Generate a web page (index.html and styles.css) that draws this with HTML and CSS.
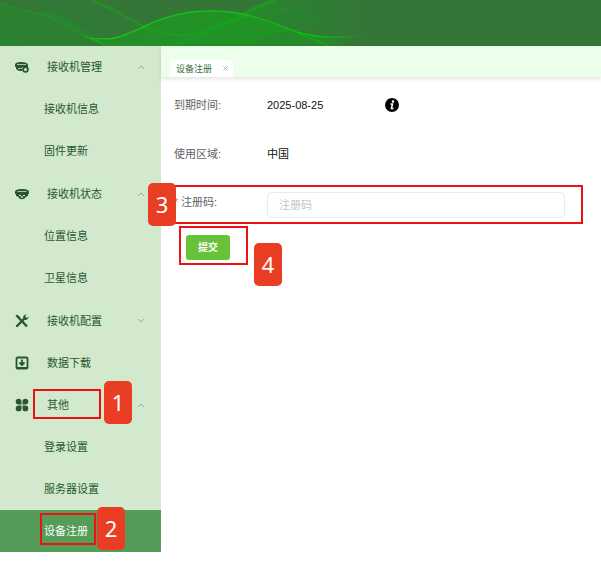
FILE: index.html
```html
<!DOCTYPE html>
<html lang="zh-CN">
<head>
<meta charset="utf-8">
<meta name="viewport" content="width=device-width, initial-scale=1">
<title>设备注册</title>
<link rel="stylesheet" href="styles.css">
</head>
<body>
<header class="banner">
  <svg class="waves" width="400" height="46" viewBox="0 0 400 46" aria-hidden="true">
    <defs>
      <linearGradient id="hill" x1="88" y1="0" x2="360" y2="0" gradientUnits="userSpaceOnUse">
        <stop offset="0" stop-color="#16a51a" stop-opacity=".45"/>
        <stop offset=".45" stop-color="#1a9d1e" stop-opacity=".7"/>
        <stop offset=".8" stop-color="#16a51a" stop-opacity=".65"/>
        <stop offset="1" stop-color="#1d9a20" stop-opacity="0"/>
      </linearGradient>
      <linearGradient id="crest" x1="80" y1="0" x2="365" y2="0" gradientUnits="userSpaceOnUse">
        <stop offset="0" stop-color="#12b816" stop-opacity="0"/>
        <stop offset=".08" stop-color="#12c816"/>
        <stop offset=".85" stop-color="#12b816"/>
        <stop offset="1" stop-color="#12b816" stop-opacity="0"/>
      </linearGradient>
      <linearGradient id="left" x1="0" y1="0" x2="110" y2="0" gradientUnits="userSpaceOnUse">
        <stop offset="0" stop-color="#1f8f27" stop-opacity=".5"/>
        <stop offset="1" stop-color="#1f9425" stop-opacity=".25"/>
      </linearGradient>
      <linearGradient id="right" x1="240" y1="0" x2="370" y2="0" gradientUnits="userSpaceOnUse">
        <stop offset="0" stop-color="#1a9a1e" stop-opacity=".6"/>
        <stop offset=".5" stop-color="#1f8f27" stop-opacity=".35"/>
        <stop offset="1" stop-color="#1f8f27" stop-opacity="0"/>
      </linearGradient>
      <filter id="soft"><feGaussianBlur stdDeviation="1"/></filter>
    </defs>
    <path d="M0 3C25 13 55 12 72 26C82 34 92 38 104 46H0Z" fill="url(#left)"/>
    <path d="M92 0C112 8 128 18 143 26C126 34 116 39 100 39C82 32 58 14 20 0Z" fill="#2b8530" opacity=".25"/>
    <path d="M88 38C112 41 122 37 143 27C170 14 190 11 212 11C250 11 275 24 300 33C320 38 340 38 360 36V46H104Z" fill="url(#hill)"/>
    <path d="M246 14C256 6 266 2 276 0H370V35C340 38 315 38 298 32C280 24 264 17 246 14Z" fill="url(#right)"/>
    <path d="M246 44C262 36 272 31 285 30C302 33 314 40 326 46H240Z" fill="#2c8230" opacity=".55"/>
    <g fill="none" stroke="#12b318" filter="url(#soft)">
      <path d="M143 27C165 37 190 38 210 28C226 20 240 20 252 14" stroke-width="3" opacity=".35"/>
      <path d="M165 46C200 42 218 25 240 18" stroke-width="4" opacity=".3"/>
      <path d="M40 12C58 14 72 24 92 38" stroke-width="5" opacity=".25"/>
      <path d="M92 0C112 8 128 18 143 26" stroke-width="2" opacity=".6"/>
      <path d="M240 16C254 7 266 3 276 0" stroke-width="3" opacity=".6"/>
      <path d="M270 10C290 8 305 14 320 20" stroke-width="2" opacity=".3"/>
    </g>
    <path d="M0 3C28 12 50 14 65 25C78 34 88 37 104 44" fill="none" stroke="#20a827" opacity=".45"/>
    <path d="M246 44C262 36 272 31 288 30" fill="none" stroke="#12b318" opacity=".6"/>
    <path d="M85 37C112 42 122 37 143 27C170 14 190 11 212 11C250 11 275 24 300 33C320 38 345 38 365 35" fill="none" stroke="url(#crest)" stroke-width="1.400"/>
    <path d="M90 38L104 44M298 33C308 37 318 42 328 46" fill="none" stroke="#0fc012" stroke-width="1.500" opacity=".5"/>
  </svg>
</header>

<div class="layout">
  <nav class="sidebar" aria-label="主菜单">
    <section class="group">
      <button class="item" type="button">
        <svg class="icon" viewBox="0 0 16 16"><path d="M1 5.500C1 2 13 2 14 5.500V8H1Z" fill="currentColor"/><path d="M3 5.500H12" stroke="#a5c5a3"/><path d="M2 8V9.500C3 11.500 5 12 8 12V8Z" fill="currentColor"/><path d="M4 9.500H8" stroke="#a5c5a3"/><circle cx="11.500" cy="10.500" r="2.400" fill="#d2e9cd" stroke="currentColor" stroke-width="1.800"/></svg>
        <span class="label">接收机管理</span>
        <svg class="chevron" viewBox="0 0 8 8"><path d="M1 6L4 3L7 6"/></svg>
      </button>
      <a class="sub" href="#info">接收机信息</a>
      <a class="sub" href="#firmware">固件更新</a>
    </section>
    <section class="group">
      <button class="item" type="button">
        <svg class="icon" viewBox="0 0 16 16"><path d="M1 5.500C1 2 15 2 15 5.500V8H1Z" fill="currentColor"/><path d="M3.500 5.500H12.500" stroke="#a5c5a3"/><path d="M2 8H14V10L11.500 11C11 14 5 14 4.500 11L2 10Z" fill="currentColor"/><path d="M5 9.500H7M9 9.500H11" stroke="#d2e9cd"/><circle cx="8" cy="11" r="1" fill="#d2e9cd"/></svg>
        <span class="label">接收机状态</span>
        <svg class="chevron" viewBox="0 0 8 8"><path d="M1 6L4 3L7 6"/></svg>
      </button>
      <a class="sub" href="#position">位置信息</a>
      <a class="sub" href="#satellite">卫星信息</a>
    </section>
    <button class="item" type="button">
      <svg class="icon" viewBox="0 0 16 16"><path d="M4 4L13 13.500" stroke="currentColor" stroke-width="2.400"/><path d="M1.500 3L3 1.500L6 4L4.500 6Z" fill="currentColor"/><path d="M3 13L11 5" stroke="currentColor" stroke-width="2.400" stroke-linecap="round"/><path d="M12.500 1.500C9.500 1.500 8.500 4 9.500 6.500C12 7.500 14.500 6.500 14.500 3.500L12.500 5L11 3.500Z" fill="currentColor"/></svg>
      <span class="label">接收机配置</span>
      <svg class="chevron" viewBox="0 0 8 8"><path d="M1 2L4 5L7 2"/></svg>
    </button>
    <a class="item" href="#download">
      <svg class="icon" viewBox="0 0 16 16"><rect x="2.500" y="2.500" width="11" height="11" rx="1" fill="none" stroke="currentColor" stroke-width="1.800"/><path d="M2 12H14V14H2Z" fill="currentColor"/><path d="M8 4.500V10M5.500 7.500L8 10L10.500 7.500" fill="none" stroke="currentColor" stroke-width="1.800"/></svg>
      <span class="label">数据下载</span>
    </a>
    <section>
      <button class="item" type="button">
        <svg class="icon" viewBox="0 0 16 16" fill="currentColor"><path d="M7.500 7.500H4.600A2.900 2.900 0 1 1 7.500 4.600ZM8.500 7.500V4.600A2.900 2.900 0 1 1 11.400 7.500ZM7.500 8.500V11.400A2.900 2.900 0 1 1 4.600 8.500ZM8.500 8.500H11.400A2.900 2.900 0 1 1 8.500 11.400Z"/></svg>
        <span class="label">其他</span>
        <svg class="chevron" viewBox="0 0 8 8"><path d="M1 6L4 3L7 6"/></svg>
        <span class="frame frame-other"></span>
        <span class="badge badge-other">1</span>
      </button>
      <a class="sub" href="#login">登录设置</a>
      <a class="sub" href="#server">服务器设置</a>
      <a class="sub active" href="#register" aria-current="page">设备注册
        <span class="frame frame-register"></span>
        <span class="badge badge-register">2</span>
      </a>
    </section>
  </nav>

  <main class="content">
    <div class="tabs">
      <div class="tab"><a href="#register">设备注册</a><button class="close" type="button" aria-label="关闭"><svg viewBox="0 0 6 6"><path d="M.5 .5L5.500 5.500M5.500 .5L.5 5.500"/></svg></button></div>
    </div>
    <form class="form">
      <div class="row">
        <span class="name">到期时间:</span>
        <span class="value">2025-08-25</span>
        <svg class="info" viewBox="0 0 14 14"><circle cx="7" cy="7" r="7"/><circle cx="8" cy="3.500" r="1.200" fill="#fff"/><path d="M5.500 6H7.500L6.400 10.500H8.500" fill="none" stroke="#fff" stroke-width="1.500"/></svg>
      </div>
      <div class="row">
        <span class="name">使用区域:</span>
        <span class="value">中国</span>
      </div>
      <div class="row code">
        <label class="name" for="code"><span class="required">*</span>注册码:</label>
        <input class="input" id="code" type="text" placeholder="注册码">
        <span class="frame frame-code"></span>
        <span class="badge badge-code">3</span>
      </div>
      <div class="actions">
        <button class="submit" type="submit">提交</button>
        <span class="frame frame-submit"></span>
        <span class="badge badge-submit">4</span>
      </div>
    </form>
  </main>
</div>
</body>
</html>
```
FILE: styles.css
```css
* {
  box-sizing: border-box;
}

body {
  margin: 0;
  background: #fff;
  color: #111;
  font: 11px/20px "Liberation Sans", "Noto Sans CJK SC", sans-serif;
}

button,
input {
  font: inherit;
}

a {
  color: inherit;
  text-decoration: none;
}

.banner {
  height: 46px;
  overflow: hidden;
  background: #357538;
}

.waves {
  display: block;
}

.layout {
  display: grid;
  grid-template-columns: 161px 1fr;
  align-items: start;
}

/* Sidebar */
.sidebar {
  background: #d2e9cd;
  color: #28572f;
}

.group {
  padding-bottom: 1px;
}

.item,
.sub {
  position: relative;
  display: flex;
  align-items: center;
  width: 100%;
  height: 42px;
}

.item {
  gap: 17px;
  padding: 0 16px 0 14px;
  border: 0;
  background: none;
  color: inherit;
  text-align: left;
}

.sub {
  padding-left: 44px;
}

.active {
  background: #559c58;
  color: #fff;
}

.icon {
  flex: none;
  width: 16px;
  height: 16px;
}

.label {
  flex: 1;
}

.chevron {
  width: 8px;
  height: 8px;
  fill: none;
  stroke: #8fae8f;
}

/* Tabs */
.tabs {
  display: flex;
  align-items: flex-end;
  height: 31px;
  padding-left: 9px;
  background: #ebffeb;
  box-shadow: 0 2px 4px #0000001c;
}

.tab {
  display: flex;
  align-items: center;
  gap: 11px;
  height: 17px;
  padding: 0 5px 0 6px;
  border-radius: 2px 2px 0 0;
  background: #fff;
  color: #3b7040;
  font-size: 9px;
}

.close {
  display: flex;
  padding: 0;
  border: 0;
  background: none;
}

.close svg {
  width: 5px;
  height: 5px;
  stroke: #8fb096;
  stroke-width: 1;
}

/* Form */
.form {
  padding: 15px 36px 0 13px;
}

.row {
  position: relative;
  display: grid;
  grid-template-columns: 93px 118px 1fr;
  align-items: center;
  height: 26px;
  margin-bottom: 23px;
}

.name {
  color: #606266;
}

.info {
  width: 14px;
  height: 14px;
}

.code {
  grid-template-columns: 93px 1fr;
  margin: 25px 0 17px;
}

.code .name {
  align-self: start;
}

.required {
  display: inline-block;
  width: 7px;
  color: #f56c6c;
}

.input {
  width: 100%;
  height: 26px;
  padding: 0 11px;
  border: 1px solid #e8ebee;
  border-radius: 4px;
  background: #fff;
  color: #606266;
}

.input::placeholder {
  color: #c0c4cc;
}

.actions {
  position: relative;
  padding-left: 12px;
}

.submit {
  display: block;
  height: 25px;
  padding: 0 12px;
  border: 0;
  border-radius: 3px;
  background: #67c23a;
  color: #fff;
  font-size: 10px;
  font-weight: 700;
}

/* Numbered callouts lying over the page */
.frame {
  position: absolute;
  border: 2px solid #ee1111;
  pointer-events: none;
}

.badge {
  position: absolute;
  z-index: 1;
  width: 28px;
  height: 43px;
  border-radius: 5px;
  background: #e93d24;
  color: #fff;
  font: 22px/43px "Noto Sans", sans-serif;
  text-align: center;
}

.frame-other {
  inset: 5px 60px 7px 33px;
}

.badge-other {
  top: -3px;
  left: 104px;
}

.frame-register {
  inset: 3px 65px 7px 40px;
}

.badge-register {
  top: -3px;
  left: 97px;
}

.frame-code {
  inset: -7px -18px -6px -2px;
}

.badge-code {
  top: -9px;
  left: -26px;
}

.frame-submit {
  top: -9px;
  left: 5px;
  width: 69px;
  height: 39px;
}

.badge-submit {
  top: 8px;
  left: 80px;
}
```
